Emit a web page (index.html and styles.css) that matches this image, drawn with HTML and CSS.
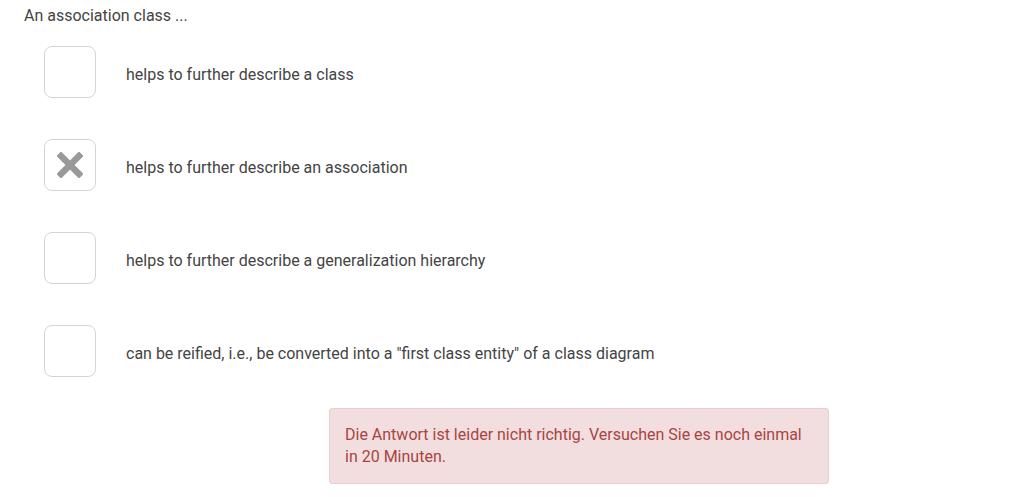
FILE: index.html
```html
<!DOCTYPE html>
<html>
<head>
<meta charset="utf-8">
<link rel="stylesheet" href="styles.css">
</head>
<body>
<div class="quiz">
  <div class="question">An association class ...</div>
  <div class="options">
    <div class="option">
      <div class="box"></div>
      <div class="label">helps to further describe a class</div>
    </div>
    <div class="option">
      <div class="box">
        <svg width="26" height="26" viewBox="0 0 26 26"><path d="M4 4 L22 22 M22 4 L4 22" stroke="#999" stroke-width="6.5" stroke-linecap="square"/></svg>
      </div>
      <div class="label">helps to further describe an association</div>
    </div>
    <div class="option">
      <div class="box"></div>
      <div class="label">helps to further describe a generalization hierarchy</div>
    </div>
    <div class="option">
      <div class="box"></div>
      <div class="label">can be reified, i.e., be converted into a "first class entity" of a class diagram</div>
    </div>
  </div>
  <div class="alert">Die Antwort ist leider nicht richtig. Versuchen Sie es noch einmal in 20 Minuten.</div>
</div>
</body>
</html>
```
FILE: styles.css
```css
body {
  margin: 0;
  background: #fff;
  font-family: Roboto, "Liberation Sans", sans-serif;
  font-size: 16px;
  color: #444;
}
.quiz {
  padding: 5px 0 0 24px;
}
.question {
  line-height: 22px;
}
.options {
  display: flex;
  flex-direction: column;
  gap: 41px;
  margin-top: 19px;
  padding-left: 20px;
}
.option {
  display: flex;
  align-items: center;
  gap: 30px;
}
.box {
  width: 50px;
  height: 50px;
  border: 1px solid #d4d4d4;
  border-radius: 8px;
  display: flex;
  align-items: center;
  justify-content: center;
  flex: none;
}
.label {
  line-height: 22px;
  padding-top: 5px;
}
.alert {
  margin: 31px 0 0 305px;
  width: 468px;
  padding: 15px 15px 15px;
  line-height: 22px;
  background: #f2dede;
  border: 1px solid #ebccd1;
  border-radius: 3px;
  color: #a94442;
}
```
